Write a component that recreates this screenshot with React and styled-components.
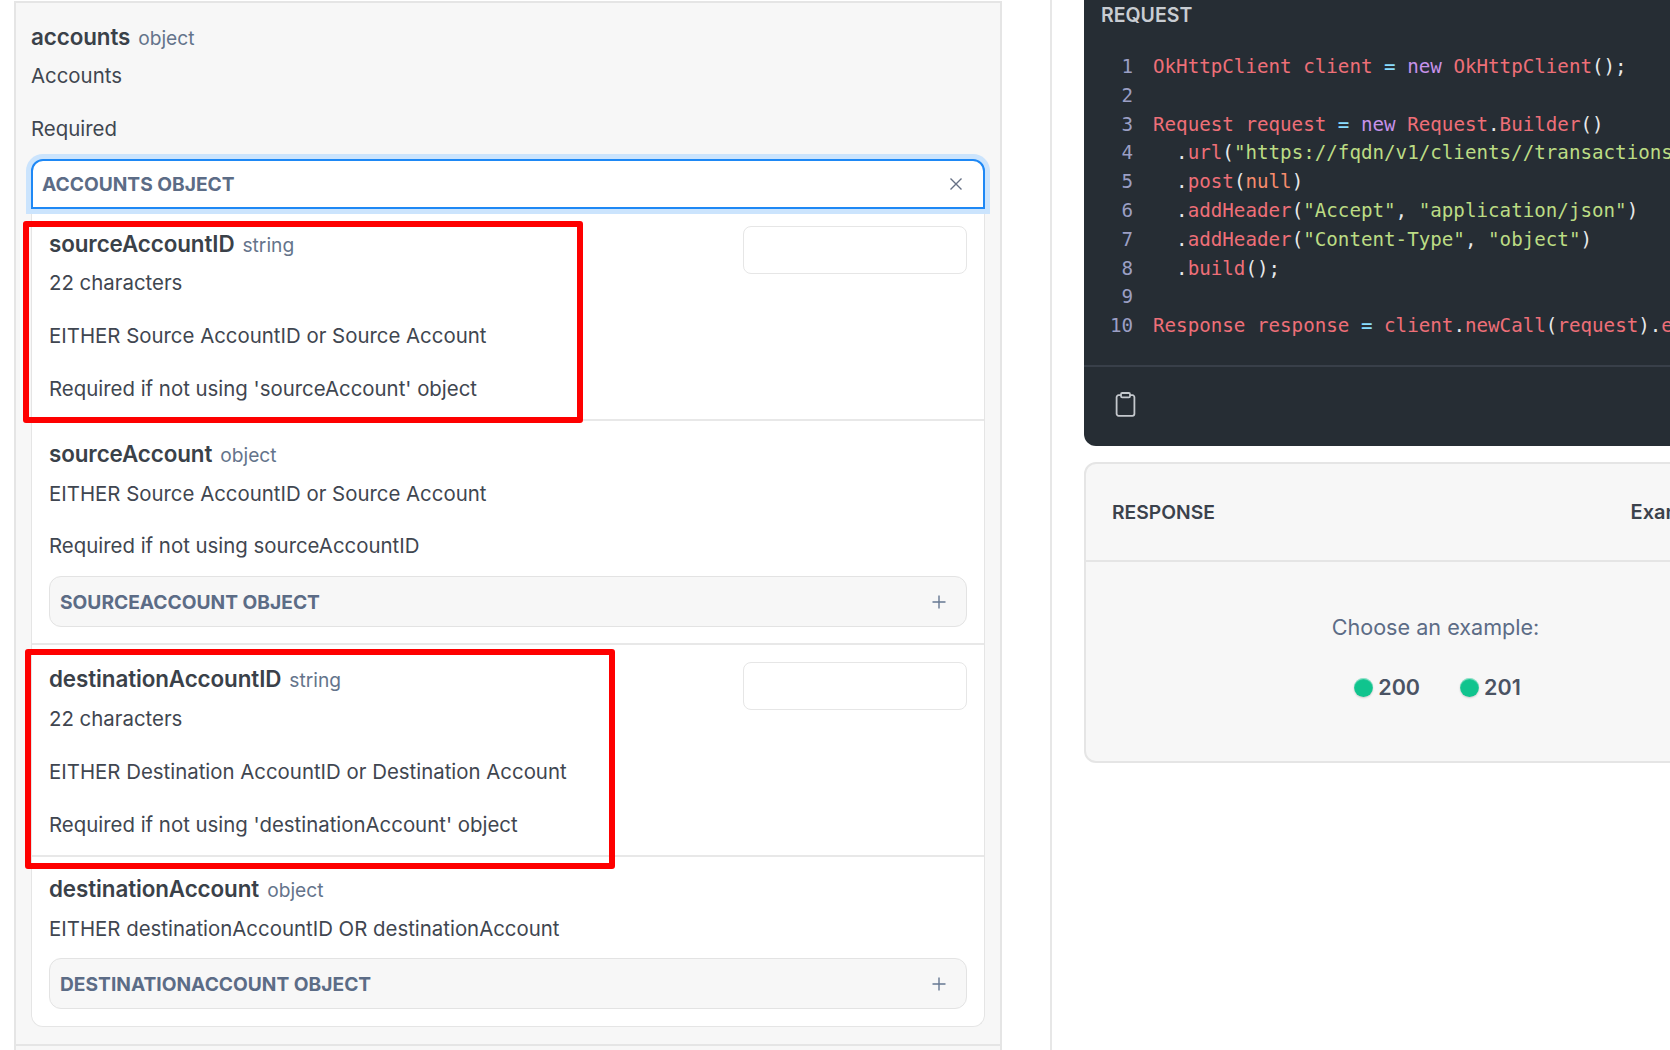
import React from 'react';
import styled, { createGlobalStyle } from 'styled-components';

const GlobalStyle = createGlobalStyle`
	html, body {
		margin: 0;
		height: 100%;
		overflow: hidden;
		background: #fff;
		font-family: Inter, "Noto Sans", sans-serif;
		color: #3b424c;
	}
`

const CODE = [
	[['r', 'OkHttpClient client '], ['c', '='], ['p', ' '], ['v', 'new'], ['r', ' OkHttpClient'], ['w', '();']],
	[],
	[['r', 'Request request '], ['c', '='], ['p', ' '], ['v', 'new'], ['r', ' Request'], ['w', '.'], ['r', 'Builder'], ['w', '()']],
	[['w', '  .'], ['r', 'url'], ['w', '('], ['g', '"https://fqdn/v1/clients//transactions"'], ['w', ')']],
	[['w', '  .'], ['r', 'post'], ['w', '('], ['o', 'null'], ['w', ')']],
	[['w', '  .'], ['r', 'addHeader'], ['w', '('], ['g', '"Accept"'], ['w', ', '], ['g', '"application/json"'], ['w', ')']],
	[['w', '  .'], ['r', 'addHeader'], ['w', '('], ['g', '"Content-Type"'], ['w', ', '], ['g', '"object"'], ['w', ')']],
	[['w', '  .'], ['r', 'build'], ['w', '();']],
	[],
	[['r', 'Response response '], ['c', '='], ['r', ' client'], ['w', '.'], ['r', 'newCall'], ['w', '('], ['r', 'request'], ['w', ').'], ['r', 'execute'], ['w', '();']],
]

const TOKEN_COLORS = {
	r: '#ee6f78',
	g: '#bcdc84',
	v: '#c792ea',
	c: '#89ddff',
	o: '#f78c6c',
	w: '#e8e9ea',
	p: '#e8e9ea',
}

const CloseIcon = () => <svg width="14" height="14" viewBox="0 0 14 14" fill="none" stroke="#667085" strokeWidth="1.4">
	<path d="M1.5 1.5l11 11M12.5 1.5l-11 11" />
</svg>

const PlusIcon = () => <svg width="14" height="14" viewBox="0 0 14 14" fill="none" stroke="#667892" strokeWidth="1.4">
	<path d="M7 .5v13M.5 7h13" />
</svg>

const ClipboardIcon = () => <svg width="21" height="25" viewBox="0 0 21 25" fill="none" stroke="#c4c8cd" strokeWidth="1.8" strokeLinejoin="round">
	<path d="M6 3.2H3.6A2 2 0 0 0 1.6 5.2v16.6a2 2 0 0 0 2 2h13.8a2 2 0 0 0 2-2V5.2a2 2 0 0 0-2-2H15" />
	<rect x="6" y="1" width="9" height="4.4" rx="1.2" />
</svg>

const Field = ({ name, type, gap = 10, children }) => <>
	<Title $gap={gap}>
		<Name>{name}</Name>
		<Type>{type}</Type>
	</Title>
	{children}
</>

const App = () => <Page>
	<GlobalStyle />
	<Panel>
		<Section>
			<Field name="accounts" type="object" gap={9}>
				<Desc>Accounts</Desc>
				<Desc>Required</Desc>
			</Field>
			<OpenHead>
				<HeadLabel>Accounts object</HeadLabel>
				<CloseIcon />
			</OpenHead>
			<Card>
				<Row>
					<RowText $top={3}>
						<Field name="sourceAccountID" type="string" gap={9}>
							<Desc>22 characters</Desc>
							<Desc>EITHER Source AccountID or Source Account</Desc>
							<Desc>Required if not using 'sourceAccount' object</Desc>
						</Field>
					</RowText>
					<ValueInput />
					<Highlight $left={-9} $top={12} $width={560} $height={202} />
				</Row>
				<Row $bottom={16}>
					<RowText $top={1}>
						<Field name="sourceAccount" type="object">
							<Desc>EITHER Source AccountID or Source Account</Desc>
							<Desc>Required if not using sourceAccountID</Desc>
						</Field>
						<ClosedHead>
							<HeadLabel>sourceAccount object</HeadLabel>
							<PlusIcon />
						</ClosedHead>
					</RowText>
				</Row>
				<Row>
					<RowText $top={2}>
						<Field name="destinationAccountID" type="string">
							<Desc>22 characters</Desc>
							<Desc>EITHER Destination AccountID or Destination Account</Desc>
							<Desc>Required if not using 'destinationAccount' object</Desc>
						</Field>
					</RowText>
					<ValueInput />
					<Highlight $left={-7} $top={4} $width={590} $height={220} />
				</Row>
				<Row>
					<RowText $top={0}>
						<Field name="destinationAccount" type="object">
							<Desc>EITHER destinationAccountID OR destinationAccount</Desc>
						</Field>
						<ClosedHead>
							<HeadLabel>destinationAccount object</HeadLabel>
							<PlusIcon />
						</ClosedHead>
					</RowText>
				</Row>
			</Card>
		</Section>
	</Panel>
	<Aside>
		<RequestCard>
			<RequestLabel>Request</RequestLabel>
			<Code>
				{CODE.map((tokens, i) => <CodeLine key={i}>
					<LineNo>{i + 1}</LineNo>
					<span>
						{tokens.map(([color, text], j) => <Tok key={j} $color={TOKEN_COLORS[color]}>{text}</Tok>)}
					</span>
				</CodeLine>)}
			</Code>
			<RequestFooter>
				<ClipboardIcon />
			</RequestFooter>
		</RequestCard>
		<ResponseCard>
			<ResponseHead>
				<ResponseLabel>Response</ResponseLabel>
				<ExamplesLabel>Examples</ExamplesLabel>
			</ResponseHead>
			<ResponseBody>
				<Choose>Choose an example:</Choose>
				<Choices>
					<Choice><Dot />200</Choice>
					<Choice><Dot />201</Choice>
				</Choices>
			</ResponseBody>
		</ResponseCard>
	</Aside>
</Page>

const Page = styled.div`
	display: flex;
	width: 1670px;
	height: 1050px;
	overflow: hidden;
	padding-left: 14px;
	box-sizing: border-box;
`
const Panel = styled.div`
	flex: none;
	width: 988px;
	height: 1049px;
	margin-top: 1px;
	box-sizing: border-box;
	background: #f7f7f7;
	border: solid #e5e5e5;
	border-width: 2px 2px 0;
`
const Section = styled.div`
	padding: 19px 15px 17px;
	border-bottom: 2px solid #e5e5e5;
`
const Title = styled.div`
	display: flex;
	align-items: baseline;
	gap: 8px;
	line-height: 29px;
	margin-bottom: ${props => props.$gap}px;
`
const Name = styled.span`
	font-size: 22.4px;
	font-weight: 600;
	color: #3a4149;
	letter-spacing: -0.1px;
`
const Type = styled.span`
	font-size: 19.2px;
	color: #64748b;
`
const Desc = styled.p`
	margin: 24px 0 0;
	font-size: 20.4px;
	line-height: 28.8px;
	color: #3f4650;
	${Title} + & {
		margin-top: 0;
	}
`
const OpenHead = styled.div`
	display: flex;
	align-items: center;
	justify-content: space-between;
	box-sizing: border-box;
	height: 50px;
	margin-top: 15.6px;
	padding: 0 20px 0 9px;
	background: #fff;
	border: 2px solid #1e88f5;
	border-radius: 12px 12px 0 0;
	box-shadow: 0 0 0 5px #cbe4fd;
	position: relative;
	z-index: 1;
`
const ClosedHead = styled.div`
	display: flex;
	align-items: center;
	justify-content: space-between;
	box-sizing: border-box;
	height: 51px;
	margin-top: 15px;
	padding: 0 20px 0 10px;
	background: #f7f7f7;
	border: 1.5px solid #e3e3e3;
	border-radius: 12px;
`
const HeadLabel = styled.span`
	font-size: 19.2px;
	font-weight: 700;
	text-transform: uppercase;
	color: #5c6c86;
`
const Card = styled.div`
	background: #fff;
	border: 1.5px solid #e5e5e5;
	border-top: 0;
	border-radius: 0 0 12px 12px;
`
const Row = styled.div`
	position: relative;
	display: flex;
	justify-content: space-between;
	padding: 17px 17px ${props => props.$bottom || 15}px 17px;
	border-bottom: 2px solid #e8e8e8;
	&:last-child {
		border-bottom: 0;
		padding-bottom: 17px;
	}
`
const RowText = styled.div`
	flex: 1;
	padding-top: ${props => props.$top}px;
`
const ValueInput = styled.input`
	flex: none;
	width: 224px;
	height: 48px;
	box-sizing: border-box;
	background: #fff;
	border: 1.5px solid #e6e6e6;
	border-radius: 8px;
`
const Highlight = styled.div`
	position: absolute;
	left: ${props => props.$left}px;
	top: ${props => props.$top}px;
	width: ${props => props.$width}px;
	height: ${props => props.$height}px;
	box-sizing: border-box;
	border: 6px solid #fe0000;
	border-radius: 3px;
`
const Aside = styled.div`
	flex: none;
	width: 737px;
	margin-left: 48px;
	padding-left: 32px;
	box-sizing: border-box;
	border-left: 2px solid #e7e7e7;
`
const RequestCard = styled.div`
	height: 446px;
	box-sizing: border-box;
	background: #262d34;
	border-radius: 0 0 12px 12px;
	overflow: hidden;
`
const RequestLabel = styled.div`
	padding: 1px 0 0 17px;
	font-size: 19.5px;
	font-weight: 600;
	line-height: 29px;
	text-transform: uppercase;
	color: #c8ccd2;
`
const Code = styled.div`
	padding: 23px 0 24px 18px;
	border-bottom: 2px solid #383f49;
	font-family: "DejaVu Sans Mono", monospace;
	font-size: 19.2px;
	line-height: 28.8px;
	white-space: pre;
`
const CodeLine = styled.div`
	display: flex;
	gap: 20px;
	height: 28.8px;
`
const LineNo = styled.span`
	flex: none;
	width: 31px;
	text-align: right;
	color: #9b9fc4;
`
const Tok = styled.span`
	color: ${props => props.$color};
`
const RequestFooter = styled.div`
	display: flex;
	padding: 25px 0 0 31px;
`
const ResponseCard = styled.div`
	height: 301px;
	margin-top: 16px;
	box-sizing: border-box;
	background: #f7f7f7;
	border: 2px solid #e5e5e5;
	border-radius: 12px;
`
const ResponseHead = styled.div`
	display: flex;
	align-items: center;
	justify-content: space-between;
	height: 96px;
	padding: 0 26px;
	border-bottom: 2px solid #e5e5e5;
`
const ResponseLabel = styled.span`
	font-size: 19.3px;
	font-weight: 600;
	text-transform: uppercase;
	color: #3b424c;
`
const ExamplesLabel = styled.span`
	font-size: 20px;
	font-weight: 600;
	color: #3b424c;
	margin-right: 35px;
`
const ResponseBody = styled.div`
	display: flex;
	flex-direction: column;
	align-items: center;
	padding-top: 50px;
`
const Choose = styled.div`
	font-size: 21.6px;
	line-height: 30px;
	color: #5c6c86;
`
const Choices = styled.div`
	display: flex;
	gap: 40px;
	margin-top: 31px;
	padding-left: 4px;
`
const Choice = styled.div`
	display: flex;
	align-items: center;
	gap: 5px;
	font-size: 21.5px;
	font-weight: 600;
	line-height: 29px;
	color: #4a5363;
`
const Dot = styled.span`
	width: 19px;
	height: 19px;
	border-radius: 50%;
	background: #10c48e;
	box-shadow: inset 0 1px 1px rgba(255, 255, 255, 0.6), 0 1px 2px rgba(0, 0, 0, 0.18);
`

export default App;
